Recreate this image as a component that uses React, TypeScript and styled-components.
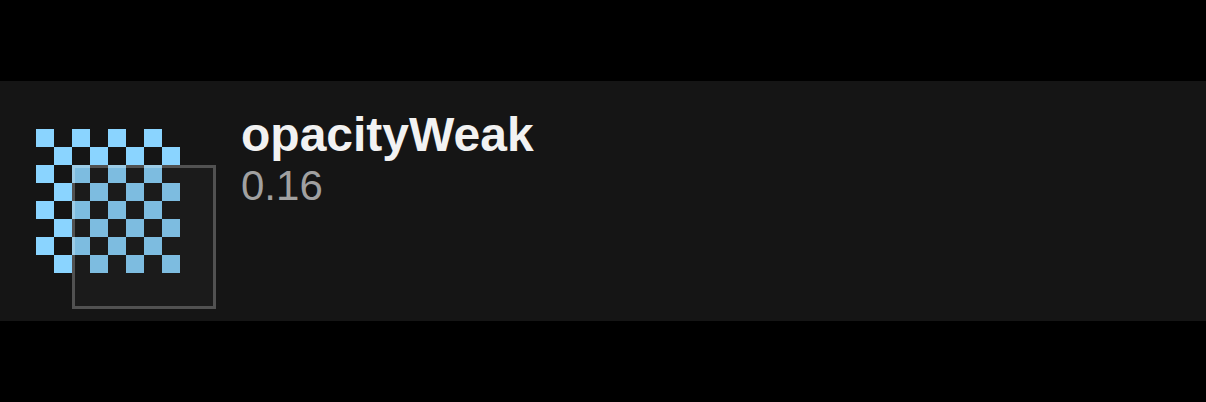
import styled, { createGlobalStyle } from "styled-components";

const GlobalStyle = createGlobalStyle`
  html, body {
    margin: 0;
    padding: 0;
    background: #000000;
  }
  body {
    font-family: "Liberation Sans", Arial, sans-serif;
  }
`;

const Page = styled.div`
  width: 1206px;
  height: 402px;
  display: flex;
  flex-direction: column;
  padding-top: 81px;
  box-sizing: border-box;
`;

const TokenRow = styled.div`
  display: flex;
  align-items: flex-start;
  gap: 25px;
  height: 240px;
  box-sizing: border-box;
  padding: 27px 36px 0;
  background: #151515;
`;

const Swatch = styled.div`
  position: relative;
  width: 180px;
  height: 180px;
  margin-top: 21px;
  flex-shrink: 0;
`;

const Checker = styled.div`
  display: grid;
  grid-template-columns: repeat(8, 18px);
  grid-template-rows: repeat(8, 18px);
`;

const Cell = styled.div<{ $on: boolean }>`
  background: ${(p) => (p.$on ? "#8ad4ff" : "transparent")};
`;

/* sits over the checkerboard to show the opacity */
const Overlay = styled.div<{ $opacity: number }>`
  position: absolute;
  left: 36px;
  top: 36px;
  width: 144px;
  height: 144px;
  box-sizing: border-box;
  border: 3px solid rgba(255, 255, 255, 0.24);
  background: rgba(64, 64, 64, ${(p) => p.$opacity});
`;

const Info = styled.div`
  display: flex;
  flex-direction: column;
`;

const Name = styled.div`
  font-size: 48px;
  line-height: 54px;
  font-weight: 700;
  color: #f2f2f2;
`;

const Value = styled.div`
  font-size: 42px;
  line-height: 48px;
  color: #a1a1a1;
`;

const token = { name: "opacityWeak", value: 0.16 };

export default function App() {
  return (
    <>
      <GlobalStyle />
      <Page>
        <TokenRow>
          <Swatch>
            <Checker>
              {Array.from({ length: 64 }, (_, i) => (
                <Cell key={i} $on={(Math.floor(i / 8) + (i % 8)) % 2 === 0} />
              ))}
            </Checker>
            <Overlay $opacity={token.value} />
          </Swatch>
          <Info>
            <Name>{token.name}</Name>
            <Value>{token.value}</Value>
          </Info>
        </TokenRow>
      </Page>
    </>
  );
}
